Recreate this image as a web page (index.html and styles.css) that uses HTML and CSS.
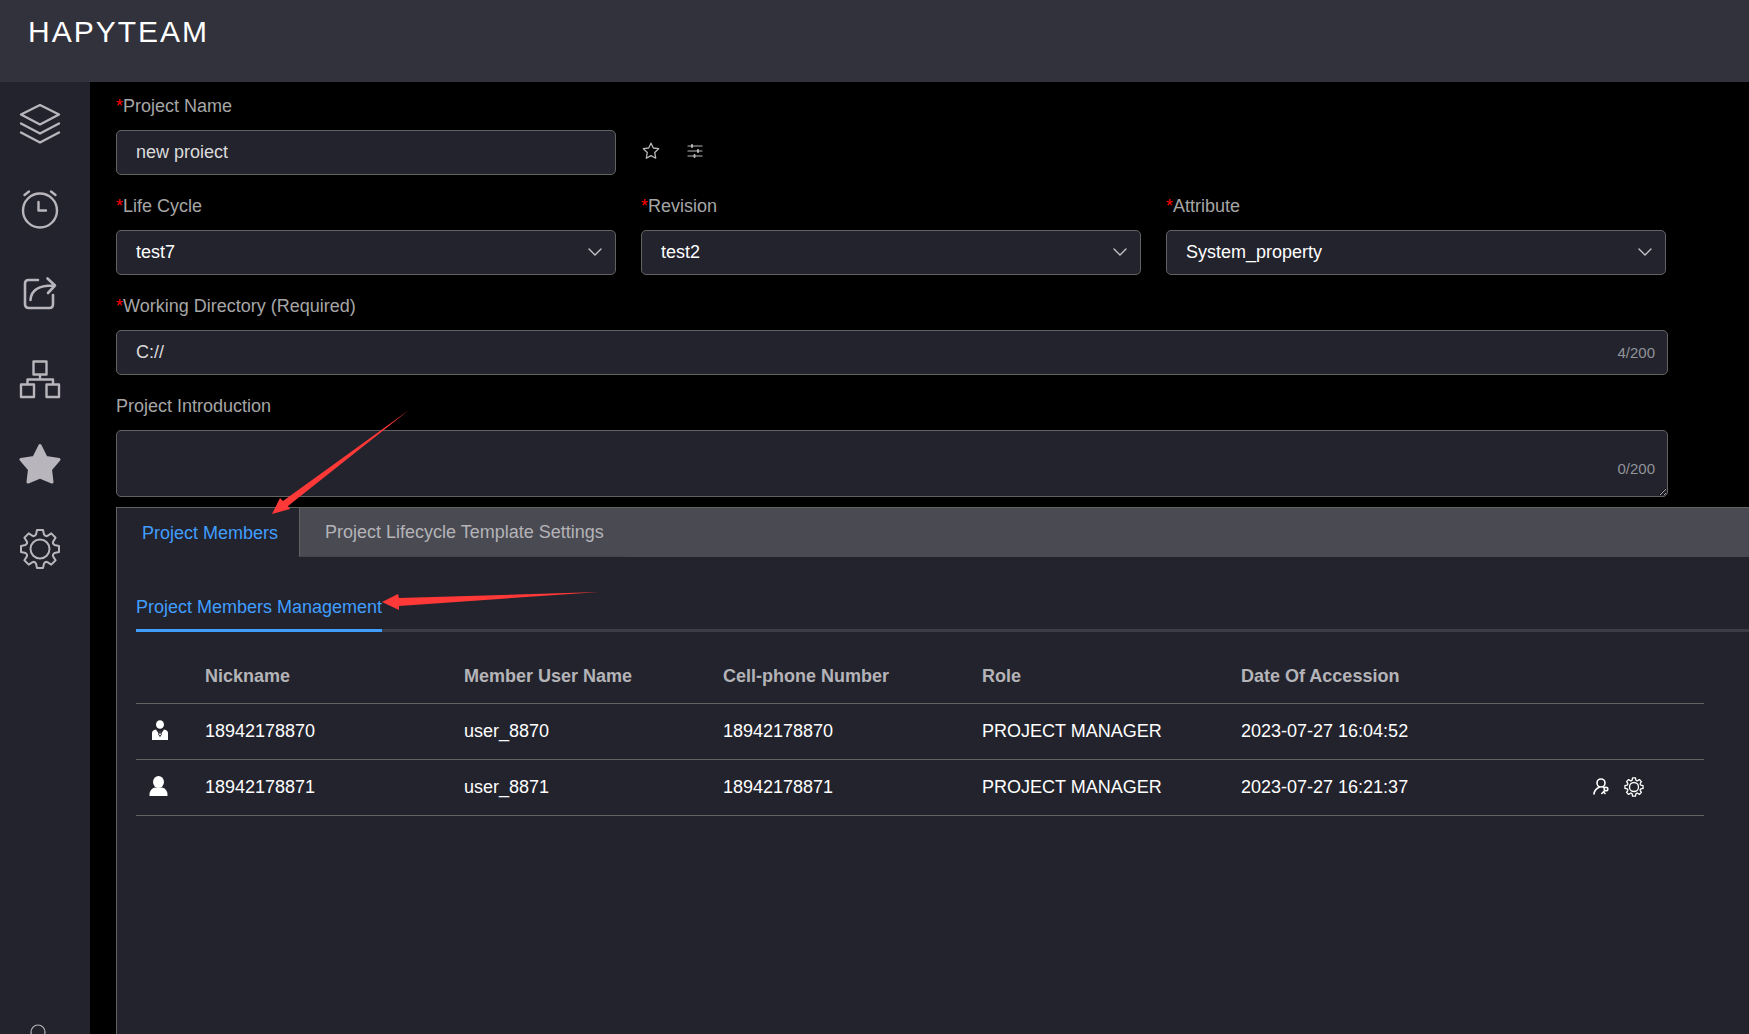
FILE: index.html
```html
<!DOCTYPE html>
<html lang="en">
<head>
<meta charset="utf-8">
<meta name="viewport" content="width=device-width, initial-scale=1">
<title>HAPYTEAM</title>
<link rel="stylesheet" href="styles.css">
</head>
<body>
<svg class="sprite" aria-hidden="true">
  <symbol id="gear" viewBox="-21 -21 42 42">
    <path d="M-4-14.5L-3-19H3L4-14.5Q5.5-12.3 7.4-13.1L11.3-15.6 15.6-11.3 13.1-7.4Q12.3-5.5 14.5-4L19-3V3L14.5 4Q12.3 5.5 13.1 7.4L15.6 11.3 11.3 15.6 7.4 13.1Q5.5 12.3 4 14.5L3 19H-3L-4 14.5Q-5.5 12.3-7.4 13.1L-11.3 15.6-15.6 11.3-13.1 7.4Q-12.3 5.5-14.5 4L-19 3V-3L-14.5-4Q-12.3-5.5-13.1-7.4L-15.6-11.3-11.3-15.6-7.4-13.1Q-5.5-12.3-4-14.5Z"/>
    <circle r="9.5"/>
  </symbol>
  <symbol id="chevron" viewBox="0 0 14 8"><path stroke-width="1.4" d="M1 1l6 6 6-6"/></symbol>
</svg>
<header class="topbar"><h1 class="brand">HAPYTEAM</h1></header>
<div class="shell">
  <nav class="sidebar" aria-label="Main">
    <a class="nav-item" href="#projects" aria-label="Projects"><svg stroke-width="2.4" viewBox="0 0 42 42"><path d="M21 2L40 11.500 21 21.500 2 11.500ZM2 20.500l19 10 19-10M2 29.500l19 10 19-10"/></svg></a>
    <a class="nav-item" href="#schedule" aria-label="Schedule"><svg stroke-width="2.4" viewBox="0 0 42 42"><circle cx="21" cy="22.500" r="17"/><path d="M5.500 7L10 3.500M36.500 7L32 3.500M19.500 14v8.500H27"/></svg></a>
    <a class="nav-item" href="#share" aria-label="Share"><svg stroke-width="2.6" viewBox="0 0 42 42"><path d="M19 7H9.500Q6 7 6 10.500V31Q6 35 10 35H30.500Q34 35 34 31V22M11.500 27C12 17 20 12 36 12.500M28.500 5.500L36 12.500 29 20"/></svg></a>
    <a class="nav-item" href="#structure" aria-label="Structure"><svg stroke-width="2.4" viewBox="0 0 42 42"><path d="M14.500 3.500h13v13h-13ZM2 26.500h13v12.500H2ZM27.500 26.500h12.500v12.500H27.500ZM21 16.500v5M8.500 26.500v-5H34v5"/></svg></a>
    <a class="nav-item" href="#favorites" aria-label="Favorites"><svg class="solid" stroke-width="3" viewBox="0 0 42 42"><path d="M21 2.500L27 14.500 40 16.500 31.500 26.500 33 39 21 34 9 39 10.500 26.500 2 16.500 15 14.500Z"/></svg></a>
    <a class="nav-item" href="#settings" aria-label="Settings"><svg stroke-width="2"><use href="#gear"/></svg></a>
    <a class="nav-item nav-user" href="#account" aria-label="Account"><svg stroke-width="1.2" viewBox="0 0 42 42"><circle cx="21" cy="11" r="7"/><path d="M6 40q2-19 15-19t15 19"/></svg></a>
  </nav>
  <main class="content">
    <form class="form">
      <div class="columns">
        <div class="field">
          <label for="name"><span class="required">*</span>Project Name</label>
          <input class="control" id="name" type="text" value="new proiect">
        </div>
        <div class="tools">
          <button class="icon-button" type="button" aria-label="Favorite"><svg stroke-width="1.3" viewBox="0 0 18 18"><path d="M9 1.200l2.300 4.800 5.400.7-4 3.700 1 5.800L9 13.600l-4.700 2.600 1-5.800L1.300 6.700l5.400-.7Z"/></svg></button>
          <button class="icon-button" type="button" aria-label="Options"><svg stroke-width="1.2" viewBox="0 0 18 18"><path d="M2 4h14M2 9h14M2 14h14"/><path stroke-width="2" d="M6 3v2M12 8v2M8.500 13v2"/></svg></button>
        </div>
      </div>
      <div class="columns">
        <div class="field">
          <label for="cycle"><span class="required">*</span>Life Cycle</label>
          <div class="holder"><select class="control" id="cycle"><option>test7</option></select><svg class="chevron"><use href="#chevron"/></svg></div>
        </div>
        <div class="field">
          <label for="revision"><span class="required">*</span>Revision</label>
          <div class="holder"><select class="control" id="revision"><option>test2</option></select><svg class="chevron"><use href="#chevron"/></svg></div>
        </div>
        <div class="field">
          <label for="attribute"><span class="required">*</span>Attribute</label>
          <div class="holder"><select class="control" id="attribute"><option>System_property</option></select><svg class="chevron"><use href="#chevron"/></svg></div>
        </div>
      </div>
      <div class="field">
        <label for="directory"><span class="required">*</span>Working Directory (Required)</label>
        <div class="holder"><input class="control" id="directory" type="text" value="C://"><span class="count">4/200</span></div>
      </div>
      <div class="field">
        <label for="intro">Project Introduction</label>
        <div class="holder"><textarea class="control intro" id="intro"></textarea><span class="count count-low">0/200</span></div>
      </div>
    </form>
    <section class="panel">
      <div class="tabs" role="tablist">
        <button class="tab active" type="button" role="tab" aria-selected="true">Project Members</button>
        <button class="tab" type="button" role="tab" aria-selected="false">Project Lifecycle Template Settings</button>
      </div>
      <div class="panel-body">
        <div class="subtabs" role="tablist">
          <button class="subtab" type="button" role="tab" aria-selected="true">Project Members Management</button>
        </div>
        <table class="members">
          <colgroup><col class="col-icon"><col class="col-data"><col class="col-data"><col class="col-data"><col class="col-data"><col class="col-data"><col></colgroup>
          <thead>
            <tr><th></th><th>Nickname</th><th>Member User Name</th><th>Cell-phone Number</th><th>Role</th><th>Date Of Accession</th><th></th></tr>
          </thead>
          <tbody>
            <tr>
              <td><svg class="avatar" viewBox="0 0 20 22"><ellipse cx="11" cy="4.500" rx="4" ry="4.300"/><path d="M3 20V13q0-3 4-3.500l4 6 4-6q4 .5 4 3.500v7Z"/><path d="M10 10.500h2l-.5 2 .8 2L11 16.500l-1.300-2 .8-2Z"/></svg></td>
              <td>18942178870</td><td>user_8870</td><td>18942178870</td><td>PROJECT MANAGER</td><td>2023-07-27 16:04:52</td><td></td>
            </tr>
            <tr>
              <td><svg class="avatar" viewBox="0 0 20 22"><ellipse cx="9.500" cy="6" rx="5.500" ry="6"/><path d="M.5 20q-.5-7 5.500-8.500h7q6 1.500 5.500 8.500Z"/></svg></td>
              <td>18942178871</td><td>user_8871</td><td>18942178871</td><td>PROJECT MANAGER</td><td>2023-07-27 16:21:37</td>
              <td><div class="actions">
                <button class="row-button" type="button" aria-label="Member role"><svg stroke-width="1.600" viewBox="0 0 18 18"><circle cx="9" cy="5" r="4"/><path d="M2 16c.3-4 2.500-5.500 5.500-7M12 9.500l-1-.7"/><circle cx="14" cy="11" r="1.800"/><path d="M12.800 12.500l-3 3M12 14.500l1 1"/></svg></button>
                <button class="row-button" type="button" aria-label="Member settings"><svg class="mini-gear" stroke-width="2.800"><use href="#gear"/></svg></button>
              </div></td>
            </tr>
          </tbody>
        </table>
      </div>
    </section>
  </main>
</div>
<svg class="annotations" aria-hidden="true">
  <path d="M272 514L280 498 283 501 409 410 288 506 290 509Z"/>
  <path d="M382 602L398 594 399 598 599 592 399 606 399 610Z"/>
</svg>
</body>
</html>
```

FILE: styles.css
```css
* { box-sizing: border-box; }

body {
  margin: 0;
  height: 100vh;
  display: flex;
  flex-direction: column;
  overflow: hidden;
  background: #000;
  color: #fff;
  color-scheme: dark;
  font: 18px/24px "Liberation Sans", Arial, sans-serif;
}

button, input, select, textarea { font: inherit; color: inherit; }
button { padding: 0; border: 0; background: none; cursor: pointer; }

svg {
  display: block;
  fill: none;
  stroke: currentColor;
  stroke-linecap: round;
  stroke-linejoin: round;
}

.sprite { position: absolute; width: 0; height: 0; }

.topbar { flex: none; padding: 14px 28px 32px; background: #32323c; }
.brand { margin: 0; font-size: 30px; line-height: 36px; font-weight: 400; letter-spacing: 2px; }

.shell { flex: 1; min-height: 0; display: flex; }

.sidebar {
  flex: none;
  width: 90px;
  padding: 21px 0 0 19px;
  display: flex;
  flex-direction: column;
  gap: 43px;
  overflow: hidden;
  background: #23232d;
  color: #b8b6bc;
}
.nav-item { flex: none; width: 42px; height: 42px; color: inherit; }
.nav-item svg { width: 42px; height: 42px; }
.nav-item .solid { fill: currentColor; }
.nav-user { margin: auto 0 -29px -2px; }

.content { flex: 1; min-width: 0; padding: 12px 0 0 26px; display: flex; flex-direction: column; }

.form { flex: none; margin-right: 81px; display: flex; flex-direction: column; gap: 19px; }
.columns { display: grid; grid-template-columns: repeat(3, 1fr); gap: 25px; padding-right: 2px; }
.field { display: flex; flex-direction: column; gap: 12px; min-width: 0; color: #a6a6a6; }
.required { color: #f00; }

.holder { position: relative; }
.control {
  display: block;
  width: 100%;
  height: 45px;
  padding: 0 19px;
  border: 1px solid #626262;
  border-radius: 5px;
  background: #23232d;
  color: #dcdcdc;
  outline: none;
}
select.control { appearance: none; padding-bottom: 2px; color: #fff; }
.intro { height: 67px; padding: 10px 19px; resize: vertical; }
.chevron { position: absolute; right: 14px; top: 18px; width: 14px; height: 8px; color: #c4c4c8; pointer-events: none; }
.count { position: absolute; right: 13px; top: 11px; font-size: 15px; color: #909399; pointer-events: none; }
.count-low { top: auto; bottom: 16px; }

.tools { display: flex; align-items: flex-end; gap: 26px; padding: 0 0 15px 1px; color: #b8b8b8; }
.icon-button svg { width: 18px; height: 18px; }

.panel {
  flex: 1;
  margin-top: 10px;
  border: solid #626262;
  border-width: 1px 0 0 1px;
  background: #23232d;
}
.tabs { display: flex; background: #4a4a52; }
.tab { height: 49px; padding: 0 21px 0 25px; border-left: 1px solid #626262; border-bottom: 1px solid #44444d; color: #b4b4b8; }
.tab.active { border: 0; background: #23232d; color: #409eff; }
.panel-body { padding: 38px 0 0 19px; }
.subtabs { display: flex; box-shadow: inset 0 -3px #3c3c47; }
.subtab { height: 37px; padding-bottom: 10px; border-bottom: 3px solid #409eff; color: #409eff; }

.members { width: calc(100% - 45px); margin-top: 17px; table-layout: fixed; border-collapse: collapse; }
.col-icon { width: 58px; }
.col-data { width: 259px; }
.members th, .members td { padding: 0 11px; border-bottom: 1px solid #626262; text-align: left; white-space: nowrap; }
.members th { height: 54px; color: #b4b4b8; }
.members td { height: 56px; }
.avatar { width: 20px; height: 22px; margin-left: 2px; fill: currentColor; stroke: none; }
.avatar path + path { stroke: #23232d; stroke-width: 1; }
.actions { display: flex; gap: 14px; padding-left: 92px; }
.row-button svg { width: 18px; height: 18px; }
.row-button .mini-gear { width: 20px; height: 20px; }

.annotations { position: absolute; left: 0; top: 0; width: 640px; height: 640px; fill: #ff3838; stroke: none; pointer-events: none; }
```
